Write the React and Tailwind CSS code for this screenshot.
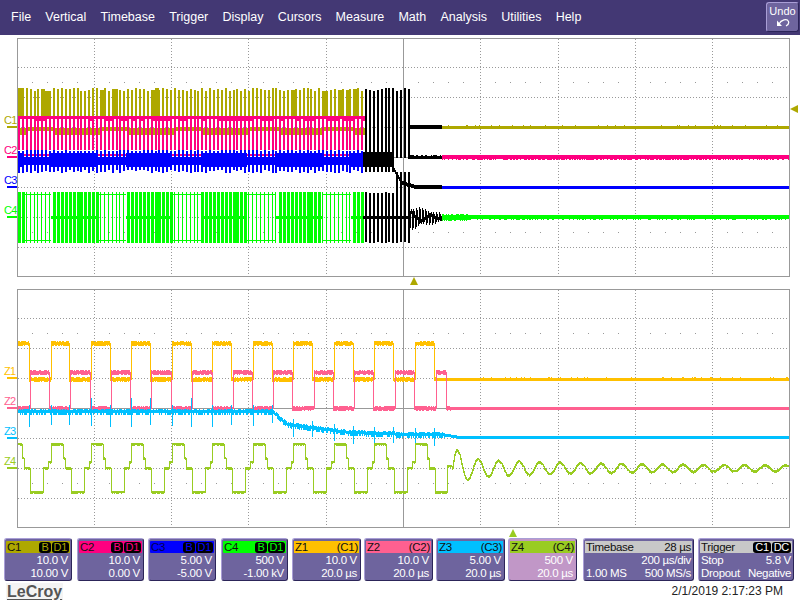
import React from "react";

let seed = 12345;
const rnd = () => {
  seed = (seed * 1664525 + 1013904223) % 4294967296;
  return seed / 4294967296;
};
const spot = (p) => rnd() < p;

const MENU = ["File", "Vertical", "Timebase", "Trigger", "Display", "Cursors", "Measure", "Math", "Analysis", "Utilities", "Help"];
const VX = [94, 171, 248, 326, 480, 558, 635, 712];

function trace(x0, x1, f, n) {
  let d = "";
  let prev = null;
  for (let x = x0; x < x1; x++) {
    const y = Math.round(f(x));
    const [up, down] = n(x);
    let a = y - up;
    let b = y + down;
    if (prev !== null) {
      a = Math.min(a, prev);
      b = Math.max(b, prev);
    }
    d += `M${x + 0.5} ${a}V${b + 1}`;
    prev = y;
  }
  return d;
}

function buildUpper() {
  const isA = (x) => x >= 22 && (x - 22) % 75 < 29;
  const p = { olive: "", pink: "", blue: "", green: "", black: "", greenThin: "", bandA: "", bandB: "" };
  for (let x = 18; x < 408; x += 3.9) {
    const c = Math.round(x);
    const black = x >= 363;
    const a = isA(x);
    const top = 88 + Math.floor(rnd() * 4);
    if (black) {
      p.black += `M${c + 1} ${top}V136M${c + 1} ${115}V${x > 392 ? 158 : 161}`;
      p.black += `M${c + 1} ${192 + Math.floor(rnd() * 2)}V${242 + Math.floor(rnd() * 2)}`;
      if (x < 394) p.black += `M${c + 1} 150V172`;
      else p.black += `M${c + 1} 172V196`;
      continue;
    }
    p.olive += `M${c + 1} ${top}V118`;
    if (spot(0.12)) p.olive += `M${c + 3} ${top}V118`;
    p.olive += `M${c + 3} ${a ? 127 : 128}V${a ? 131 : 135}`;
    p.pink += `M${c + 1} 116V150M${c + 3} 116V${spot(0.5) ? 121 : 119}`;
    p.blue += `M${c + 1} ${150 + Math.floor(rnd() * 2)}V${170 + Math.floor(rnd() * 4)}`;
    if (a) {
      p.greenThin += `M${c + 0.5} 192V243`;
    } else {
      p.green += `M${c + 1} 192V243`;
    }
  }
  for (let x = 22; x < 363; x += 75) {
    p.pink += `M${x} 155H${x + 29}`;
    p.bandA += `M${x} 161H${x + 29}`;
    p.bandB += `M${x + 29} 160H${Math.min(x + 75, 363)}`;
    p.greenThin += `M${x} 194.5H${x + 29}M${x} 240.5H${x + 29}`;
    p.green += `M${x + 29} 217H${Math.min(x + 75, 363)}`;
  }
  p.bandB += "M18 160H22";
  return p;
}

const U = buildUpper();
const up2 = () => [spot(0.7) ? 2 : 1, spot(0.7) ? 2 : 1];

const after = {
  c1b: trace(408, 442, () => 127, () => [2, 1]),
  c1: trace(442, 789, () => 127, () => [spot(0.12) ? 2 : 1, 1]),
  c2b: trace(408, 442, () => 157, () => [spot(0.4) ? 2 : 1, 1]),
  c2: trace(442, 789, () => 157, () => [2, spot(0.5) ? 2 : 1]),
  c3b: trace(392, 442, (x) => (x < 396 ? 166 + (x - 392) * 2 : x < 402 ? 174 + (x - 396) * 1.5 : x < 415 ? 183 + (x - 402) * 0.3 : 187), () => [2, 1]),
  c3: trace(442, 789, () => 187, () => [1, 1]),
  c4b: trace(408, 442, (x) => 217 + Math.sin(x * 2.2) * (2 + (9 * (442 - x)) / 34), () => [2, 2]),
  c4: trace(442, 789, () => 217, (x) => (x < 470 ? [spot(0.5) ? 3 : 2, spot(0.5) ? 3 : 2] : [2, spot(0.3) ? 2 : 1])),
};

const Z1_FALL = [29, 69, 110, 150, 191, 231, 272, 312, 353, 393, 434];
const Z1_RISE = [51, 91, 131, 172, 212, 253, 293, 334, 374, 415];
const Z2_RISE = [30, 70, 111, 151, 192, 233, 273, 314, 354, 395, 436];
const Z2_FALL = [49, 90, 130, 171, 212, 252, 292, 333, 373, 414, 446];

const stateAt = (x, on, off, start) => {
  let s = start;
  const ev = [...on.map((v) => [v, true]), ...off.map((v) => [v, false])].sort((a, b) => a[0] - b[0]);
  for (const [v, st] of ev) if (x >= v) s = st;
  return s;
};

const z1 = trace(18, 789, (x) => (stateAt(x, Z1_RISE, Z1_FALL, true) ? 343 : 379), (x) => (x > 436 ? [spot(0.08) ? 2 : 1, 1] : up2()));
const z2 = trace(18, 789, (x) => (stateAt(x, Z2_RISE, Z2_FALL, false) ? 372 : 408), (x) => (x > 450 ? [1, 1] : up2()));
const z3y = (x) => {
  if (x < 272) return 411;
  if (x < 287) return 411 + ((x - 272) / 15) * 13;
  if (x < 310) return 424 + ((x - 287) / 23) * 3;
  if (x < 350) return 427 + ((x - 310) / 40) * 5;
  if (x < 442) return 432 + Math.min(2, (x - 350) / 30);
  if (x < 460) return 434 + ((x - 442) / 18) * 3;
  return 437;
};
const edges = [...Z1_FALL, ...Z1_RISE];
const z3 = trace(18, 789, z3y, (x) => {
  if (x < 445 && edges.includes(x)) {
    const big = x < 272 ? 13 : 9;
    return [x < 272 && spot(0.6) ? big : 6, big + (x % 3)];
  }
  if (x < 445) return [spot(0.6) ? 2 : 1, spot(0.6) ? 3 : 1];
  return [1, 1];
});
const z4y = (x) => {
  if (x >= 447) {
    if (x < 452) return 466;
    const t = x - 448;
    const amp = 2.5 + 8 * Math.exp(-t / 120) + 25 * Math.exp(-t / 8);
    return 468 - amp * Math.sin((2 * Math.PI * (x - 452)) / 20.5);
  }
  let r = 10;
  for (const v of Z1_RISE) if (x >= v) r = v;
  const t = x - r;
  if (t < 12) return 444;
  if (t < 14) return 458;
  if (t < 19.5) return 468;
  if (t < 33) return 492;
  if (t < 38) return 468;
  return 462;
};
const z4 = trace(18, 789, z4y, () => [1, spot(0.7) ? 1 : 0]);

const TICKX = (() => {
  const starts = [18, 94, 171, 248, 326, 403, 480, 558, 635, 712];
  const out = [];
  starts.forEach((s) => {
    [15, 30, 45, 60].forEach((k) => out.push(s + k - (s === 18 ? 1 : 0)));
  });
  return out;
})();

function GridLines({ y0, y1, ticks, dots, center }) {
  return (
    <g shapeRendering="crispEdges" fill="none" stroke="#999999" strokeWidth="1">
      {VX.map((x) => (
        <path key={x} d={`M${x + 0.5} ${y0}V${y1}`} strokeDasharray="1 2" />
      ))}
      {dots.map((y) => (
        <path key={y} d={`M18 ${y + 0.5}H789`} strokeDasharray="1 2" />
      ))}
      <path d={`M18 ${center + 0.5}H789`} />
      <path d={`M403.5 ${y0}V${y1}`} />
      {ticks.map((y) => TICKX.map((x) => <rect key={`${y}-${x}`} x={x} y={y} width="1" height="1" fill="#999999" stroke="none" />))}
    </g>
  );
}

function Gutter({ items, offset }) {
  return (
    <div className="relative w-[17px] shrink-0">
      {items.map(([label, color, y]) => (
        <React.Fragment key={label}>
          <span className="absolute left-[4px] text-[11px] leading-[11px] tracking-[-0.6px]" style={{ top: y - offset - 12, color }}>
            {label}
          </span>
          <span className="absolute left-[7px] w-[10px] h-[2px]" style={{ top: y - offset - 1, backgroundColor: color }} />
        </React.Fragment>
      ))}
    </div>
  );
}

const OLIVE = "#aea800";
const PINK = "#ff0080";
const BLUE = "#0000ff";
const GREEN = "#00ff00";
const Z1C = "#ffc000";
const Z2C = "#ff6090";
const Z3C = "#00c0ff";
const Z4C = "#99cc22";

function UpperPlot() {
  return (
    <div className="flex h-[239px]">
      <Gutter offset={38} items={[["C1", OLIVE, 127], ["C2", PINK, 157], ["C3", BLUE, 187], ["C4", GREEN, 217]]} />
      <div className="w-[773px] border border-[#999999] bg-white">
        <svg width="771" height="237" viewBox="18 39 771 237" className="block">
          <GridLines y0={39} y1={276} ticks={[82, 232]} dots={[67, 97, 127, 187, 217, 247]} center={157} />
          <g fill="none" shapeRendering="crispEdges">
            <path d={U.greenThin} stroke={GREEN} strokeWidth="1" />
            <path d={U.green} stroke={GREEN} strokeWidth="3" />
            <path d={U.olive} stroke={OLIVE} strokeWidth="2" />
            <path d={U.pink} stroke={PINK} strokeWidth="2" />
            <path d={U.blue} stroke={BLUE} strokeWidth="2" />
            <path d={U.bandA} stroke={BLUE} strokeWidth="8" />
            <path d={U.bandB} stroke={BLUE} strokeWidth="14" />
            <path d="M363 159H394" stroke="#000" strokeWidth="15" />
            <path d="M363 217H408" stroke="#000" strokeWidth="3" />
            <path d={U.black} stroke="#000" strokeWidth="2" />
            <path d={after.c1b + after.c2b + after.c3b + after.c4b} stroke="#000" strokeWidth="1" />
            <path d={after.c1} stroke={OLIVE} strokeWidth="1" />
            <path d={after.c2} stroke={PINK} strokeWidth="1" />
            <path d={after.c3} stroke={BLUE} strokeWidth="1" />
            <path d={after.c4} stroke={GREEN} strokeWidth="1" />
          </g>
        </svg>
      </div>
      <div className="relative flex-1">
        <svg width="9" height="8" viewBox="0 0 9 8" className="absolute left-0 top-[67px]">
          <path d="M0 4L8 0V8Z" fill={OLIVE} />
        </svg>
      </div>
    </div>
  );
}

function LowerPlot() {
  return (
    <div className="flex h-[239px]">
      <Gutter offset={289} items={[["Z1", Z1C, 378], ["Z2", Z2C, 408], ["Z3", Z3C, 438], ["Z4", Z4C, 468]]} />
      <div className="w-[773px] border border-[#999999] bg-white">
        <svg width="771" height="237" viewBox="18 290 771 237" className="block">
          <GridLines y0={290} y1={527} ticks={[333, 483]} dots={[318, 348, 378, 438, 468, 498]} center={408} />
          <g fill="none" shapeRendering="crispEdges" strokeWidth="1">
            <path d={z1} stroke={Z1C} />
            <path d={z2} stroke={Z2C} />
            <path d={z3} stroke={Z3C} />
            <path d={z4} stroke={Z4C} />
          </g>
        </svg>
      </div>
    </div>
  );
}

function Badge({ children, color }) {
  return (
    <span className="h-[11px] px-[2px] rounded-[3px] bg-black text-[11px] leading-[11px] flex items-center" style={{ color }}>
      {children}
    </span>
  );
}

function Card({ className, selected, children }) {
  return (
    <div
      className={`relative h-[43px] rounded-[3px] border border-t-[#a99ed6] border-l-[#a99ed6] border-r-[#2c2559] border-b-[#2c2559] px-px pt-[2px] flex flex-col text-white text-[11.5px] tracking-[-0.3px] leading-[13px] ${
        selected ? "bg-[#c197c7]" : "bg-[#6e649e]"
      } ${className}`}
    >
      {children}
    </div>
  );
}

function Channel({ name, color, text, v1, v2, className }) {
  return (
    <Card className={className}>
      <div className="h-[12px] px-px flex items-center justify-between rounded-[1px]" style={{ backgroundColor: color }}>
        <span style={{ color: text }}>{name}</span>
        <span className="flex gap-px">
          <Badge color={color}>B</Badge>
          <Badge color={color}>D1</Badge>
        </span>
      </div>
      <div className="text-right pr-[2px] mt-[1px]">{v1}</div>
      <div className="text-right pr-[2px]">{v2}</div>
    </Card>
  );
}

function Zoom({ name, src, color, v1, v2, className, selected }) {
  return (
    <Card className={className} selected={selected}>
      <div className="h-[12px] px-px flex items-center justify-between text-[#111111]" style={{ backgroundColor: color }}>
        <span>{name}</span>
        <span>{src}</span>
      </div>
      <div className="text-right pr-[2px] mt-[1px]">{v1}</div>
      <div className="text-right pr-[2px]">{v2}</div>
      {selected && (
        <svg width="8" height="8" viewBox="0 0 8 8" className="absolute left-0 top-[-10px]">
          <path d="M4 0L8 8H0Z" fill={Z4C} />
        </svg>
      )}
    </Card>
  );
}

export default function App() {
  return (
    <div className="w-[800px] h-[600px] bg-white overflow-hidden flex flex-col font-['Liberation_Sans',Arial,sans-serif]">
      <div className="h-[35px] shrink-0 bg-[#433874] flex items-center pl-[11px] relative">
        <div className="flex gap-[14.2px] text-[12.5px] text-white">
          {MENU.map((m) => (
            <span key={m}>{m}</span>
          ))}
        </div>
        <div className="absolute right-[1px] top-[2px] w-[33px] h-[30px] rounded-[3px] bg-[#6e649e] border border-t-[#a99ed6] border-l-[#a99ed6] border-r-[#2c2559] border-b-[#2c2559] flex flex-col items-center text-white text-[11px] leading-[13px]">
          <span className="mt-[2px]">Undo</span>
          <svg width="14" height="9" viewBox="0 0 14 9" fill="none">
            <path d="M1 8L1 2.5L6 8Z" fill="#fff" />
            <path d="M3 6C5 2 11 0 12.5 3.5C13.2 5.5 12 7 10 8" stroke="#fff" strokeWidth="1.2" />
          </svg>
        </div>
      </div>
      <div className="h-[3px] shrink-0" />
      <UpperPlot />
      <div className="h-[12px] shrink-0 pl-[410px]">
        <svg width="8" height="8" viewBox="0 0 8 8" className="block">
          <path d="M4 0L8 8H0Z" fill={OLIVE} />
        </svg>
      </div>
      <LowerPlot />
      <div className="flex mt-[10px] h-[43px] shrink-0">
        <Channel name="C1" color={OLIVE} text="#111" v1="10.0 V" v2="10.00 V" className="w-[68px] ml-[4px]" />
        <Channel name="C2" color={PINK} text="#111" v1="10.0 V" v2="0.00 V" className="w-[67px] ml-[5px]" />
        <Channel name="C3" color={BLUE} text="#000050" v1="5.00 V" v2="-5.00 V" className="w-[68px] ml-[4px]" />
        <Channel name="C4" color={GREEN} text="#111" v1="500 V" v2="-1.00 kV" className="w-[67px] ml-[5px]" />
        <Zoom name="Z1" src="(C1)" color={Z1C} v1="10.0 V" v2="20.0 µs" className="w-[69px] ml-[4px]" />
        <Zoom name="Z2" src="(C2)" color={Z2C} v1="10.0 V" v2="20.0 µs" className="w-[69px] ml-[3px]" />
        <Zoom name="Z3" src="(C3)" color={Z3C} v1="5.00 V" v2="20.0 µs" className="w-[69px] ml-[3px]" />
        <Zoom name="Z4" src="(C4)" color={Z4C} v1="500 V" v2="20.0 µs" className="w-[69px] ml-[3px]" selected />
        <Card className="w-[111px] ml-[6px]">
          <div className="h-[12px] px-px flex items-center justify-between bg-[#c8c8c8] text-[#111111]">
            <span>Timebase</span>
            <span>28 µs</span>
          </div>
          <div className="text-right pr-px mt-[1px]">200 µs/div</div>
          <div className="flex justify-between px-px">
            <span>1.00 MS</span>
            <span>500 MS/s</span>
          </div>
        </Card>
        <Card className="w-[96px] ml-[4px]">
          <div className="h-[12px] px-px flex items-center justify-between bg-[#c8c8c8] text-[#111111]">
            <span>Trigger</span>
            <span className="flex gap-px">
              <Badge color="#fff">C1</Badge>
              <Badge color="#fff">DC</Badge>
            </span>
          </div>
          <div className="flex justify-between px-px mt-[1px]">
            <span>Stop</span>
            <span>5.8 V</span>
          </div>
          <div className="flex justify-between px-px">
            <span>Dropout</span>
            <span>Negative</span>
          </div>
        </Card>
      </div>
      <div className="flex-1 flex items-center justify-between">
        <span className="ml-[6px] mt-[1px] px-px bg-[#f4f4f4] text-[#555555] text-[16px] leading-[17px] font-bold underline underline-offset-[2px]">LeCroy</span>
        <span className="mr-[17px] text-[12px] text-[#222222]">2/1/2019 2:17:23 PM</span>
      </div>
    </div>
  );
}
